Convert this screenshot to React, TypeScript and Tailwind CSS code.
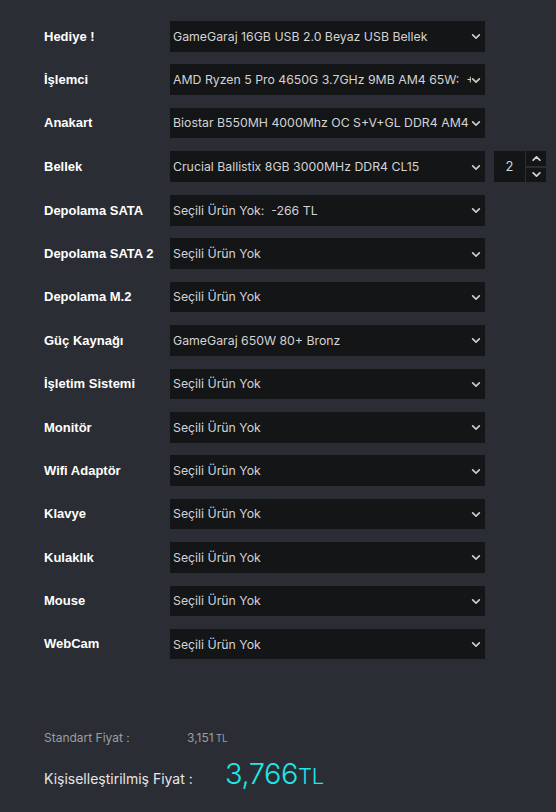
import { useState } from "react";

type Row = { label: string; value: string; qty?: boolean };

const rows: Row[] = [
  { label: "Hediye !", value: "GameGaraj 16GB USB 2.0 Beyaz USB Bellek" },
  { label: "İşlemci", value: "AMD Ryzen 5 Pro 4650G 3.7GHz 9MB AM4 65W:  +300 TL" },
  { label: "Anakart", value: "Biostar B550MH 4000Mhz OC S+V+GL DDR4 AM4 (mATX)" },
  { label: "Bellek", value: "Crucial Ballistix 8GB 3000MHz DDR4 CL15", qty: true },
  { label: "Depolama SATA", value: "Seçili Ürün Yok:  -266 TL" },
  { label: "Depolama SATA 2", value: "Seçili Ürün Yok" },
  { label: "Depolama M.2", value: "Seçili Ürün Yok" },
  { label: "Güç Kaynağı", value: "GameGaraj 650W 80+ Bronz" },
  { label: "İşletim Sistemi", value: "Seçili Ürün Yok" },
  { label: "Monitör", value: "Seçili Ürün Yok" },
  { label: "Wifi Adaptör", value: "Seçili Ürün Yok" },
  { label: "Klavye", value: "Seçili Ürün Yok" },
  { label: "Kulaklık", value: "Seçili Ürün Yok" },
  { label: "Mouse", value: "Seçili Ürün Yok" },
  { label: "WebCam", value: "Seçili Ürün Yok" },
];

function Chevron({ up = false, className = "" }: { up?: boolean; className?: string }) {
  return (
    <svg viewBox="0 0 10 6" className={className} fill="none" stroke="currentColor" strokeWidth="2" strokeLinecap="round" strokeLinejoin="round">
      <path d={up ? "M1 5 L5 1 L9 5" : "M1 1 L5 5 L9 1"} />
    </svg>
  );
}

function QtyInput() {
  const [qty, setQty] = useState(2);
  return (
    <div className="ml-[9px] flex h-[31px] shrink-0 gap-px">
      <div className="flex w-[31px] items-center justify-center bg-[#141517] text-[13px] text-[#d4d4d4]">{qty}</div>
      <div className="flex w-[20px] flex-col gap-[2px]">
        <button onClick={() => setQty(qty + 1)} className="flex flex-1 items-center justify-center bg-[#141517] text-[#d4d4d4]">
          <Chevron up className="h-[5px] w-[9px]" />
        </button>
        <button onClick={() => setQty(Math.max(1, qty - 1))} className="flex flex-1 items-center justify-center bg-[#141517] text-[#d4d4d4]">
          <Chevron className="h-[5px] w-[9px]" />
        </button>
      </div>
    </div>
  );
}

export default function App() {
  return (
    <div className="min-h-[812px] w-full overflow-hidden bg-[#2a2d33] px-[44px] pt-[21px] font-['Inter',sans-serif]">
      <div className="flex flex-col gap-[12.9px]">
        {rows.map((row) => (
          <div key={row.label} className="flex items-center">
            <div className="w-[126px] shrink-0 font-['Liberation_Sans',sans-serif] text-[13px] font-bold text-white">{row.label}</div>
            <div className="flex h-[30.5px] w-[315px] shrink-0 items-center bg-[#141517] pl-[3px] pr-[3px] pt-[1px]">
              <span className="flex-1 overflow-hidden whitespace-pre text-[12.3px] text-[#d2d3d4]">{row.value}</span>
              <Chevron className="mr-[1px] h-[5px] w-[10px] shrink-0 text-[#c8c9ca]" />
            </div>
            {row.qty ? <QtyInput /> : null}
          </div>
        ))}
      </div>

      <div className="mt-[70px] flex flex-col gap-[5px]">
        <div className="flex items-baseline text-[12px] text-[#9b9ea3]">
          <span className="w-[143px]">Standart Fiyat :</span>
          <span>3,151</span>
          <span className="ml-[2px] text-[10px]">TL</span>
        </div>
        <div className="flex items-baseline">
          <span className="w-[181px] text-[14px] text-[#e6e7e8]">Kişiselleştirilmiş Fiyat :</span>
          <span className="text-[29px] font-light tracking-[-0.5px] text-[#21e6e6]">3,766</span>
          <span className="text-[22px] font-light text-[#21e6e6]">TL</span>
        </div>
      </div>
    </div>
  );
}
